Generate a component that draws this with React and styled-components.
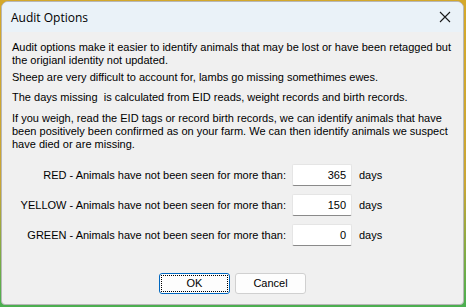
import React from "react";
import styled, { createGlobalStyle } from "styled-components";

const Global = createGlobalStyle`
  html, body {
    margin: 0;
    padding: 0;
    width: 466px;
    height: 307px;
    overflow: hidden;
    background: linear-gradient(180deg, #d4a82a 0%, #c9a535 60%, #4caf50 99%);
  }
`;

const Frame = styled.div`
  padding: 1px 1px 1px 1px;
  height: 305px;
`;

const Window = styled.div`
  width: 463px;
  height: 304px;
  border-radius: 7px 7px 4px 4px;
  overflow: hidden;
  background: #f0f0f0;
  border: 1px solid #b7b7b7;
  box-sizing: border-box;
  display: flex;
  flex-direction: column;
  font-family: Tahoma, "Liberation Sans", Arial, sans-serif;
  color: #000;
`;

const TitleBar = styled.div`
  height: 30px;
  flex: none;
  background: #eaf2f8;
  display: flex;
  align-items: center;
  justify-content: space-between;
  padding: 0 9px 0 9px;
  font-family: "Segoe UI", "Open Sans", "Noto Sans", sans-serif;
  font-size: 12px;
`;

const CloseIcon = styled.svg`
  width: 12px;
  height: 12px;
  margin-right: 3px;
`;

const Body = styled.div`
  padding: 9px 4px 0 10px;
  font-size: 11px;
  line-height: 13px;
  display: flex;
  flex-direction: column;
  flex: 1;
`;

const Para = styled.p`
  margin: 0 0 ${(p) => p.$gap || 7}px 0;
`;

const Rows = styled.div`
  margin-top: 6px;
  display: flex;
  flex-direction: column;
  gap: ${(p) => p.$gap}px;
`;

const Row = styled.div`
  display: grid;
  grid-template-columns: 274px 60px auto;
  column-gap: 6px;
  align-items: center;
`;

const Label = styled.span`
  text-align: right;
`;

const DayInput = styled.div`
  height: 22px;
  box-sizing: border-box;
  background: #fff;
  border: 1px solid #e5e5e5;
  border-bottom: 1px solid #8a8a8a;
  border-radius: 2px;
  text-align: right;
  padding: 4px 5px 0 0;
`;

const Unit = styled.span`
  margin-left: 1px;
`;

const Buttons = styled.div`
  margin-top: auto;
  padding-bottom: 10px;
  display: flex;
  justify-content: center;
  gap: 5px;
  padding-right: 6px;
`;

const Button = styled.div`
  width: 71px;
  height: 21px;
  box-sizing: border-box;
  border-radius: 3px;
  background: #fdfdfd;
  border: 1px solid ${(p) => (p.$primary ? "#0067c0" : "#d0d0d0")};
  display: flex;
  align-items: center;
  justify-content: center;
  padding: 1px;
`;

const Focus = styled.div`
  width: 100%;
  height: 100%;
  box-sizing: border-box;
  border: 1px dotted ${(p) => (p.$on ? "#000" : "transparent")};
  display: flex;
  align-items: center;
  justify-content: center;
`;

const rows = [
  { name: "RED", value: 365 },
  { name: "YELLOW", value: 150 },
  { name: "GREEN", value: 0 },
];

export default function App() {
  return (
    <>
      <Global />
      <Frame>
        <Window>
          <TitleBar>
            <span>Audit Options</span>
            <CloseIcon viewBox="0 0 12 12">
              <path d="M1 1 L11 11 M11 1 L1 11" stroke="#1a1a1a" strokeWidth="1.1" fill="none" />
            </CloseIcon>
          </TitleBar>
          <Body>
            <Para $gap={4}>
              Audit options make it easier to identify animals that may be lost or have been retagged but
              the origianl identity not updated.
            </Para>
            <Para>Sheep are very difficult to account for, lambs go missing somethimes ewes.</Para>
            <Para $gap={8}>The days missing &nbsp;is calculated from EID reads, weight records and birth records.</Para>
            <Para $gap={0}>
              If you weigh, read the EID tags or record birth records, we can identify animals that have
              been positively been confirmed as on your farm. We can then identify animals we suspect
              have died or are missing.
            </Para>
            <Rows $gap={8}>
              {rows.map((r) => (
                <Row key={r.name}>
                  <Label>{r.name} - Animals have not been seen for more than:</Label>
                  <DayInput>{r.value}</DayInput>
                  <Unit>days</Unit>
                </Row>
              ))}
            </Rows>
            <Buttons>
              <Button $primary>
                <Focus $on>OK</Focus>
              </Button>
              <Button>
                <Focus>Cancel</Focus>
              </Button>
            </Buttons>
          </Body>
        </Window>
      </Frame>
    </>
  );
}
